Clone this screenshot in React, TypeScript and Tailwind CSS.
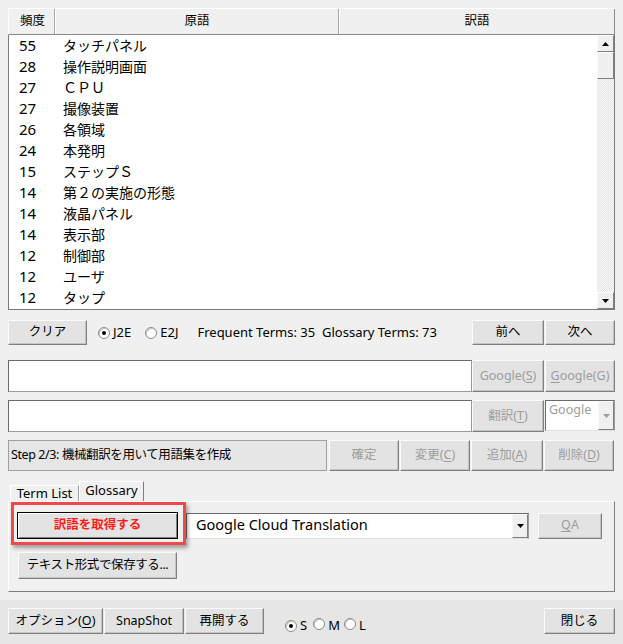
import React from "react";

const ROWS: [string, string][] = [
  ["55", "タッチパネル"],
  ["28", "操作説明画面"],
  ["27", "ＣＰＵ"],
  ["27", "撮像装置"],
  ["26", "各領域"],
  ["24", "本発明"],
  ["15", "ステップＳ"],
  ["14", "第２の実施の形態"],
  ["14", "液晶パネル"],
  ["14", "表示部"],
  ["12", "制御部"],
  ["12", "ユーザ"],
  ["12", "タップ"],
];

function U({ children }: { children: React.ReactNode }) {
  return <span className="underline underline-offset-2">{children}</span>;
}

function Btn({
  children,
  disabled,
  className = "",
}: {
  children: React.ReactNode;
  disabled?: boolean;
  className?: string;
}) {
  return (
    <button
      type="button"
      className={`flex shrink-0 items-center justify-center border border-t-[#fbfbfb] border-l-[#fbfbfb] border-r-[#7e7e7e] border-b-[#7e7e7e] bg-[#e3e3e3] text-[12.5px] shadow-[inset_-1px_-1px_0_#c4c4c4] ${
        disabled ? "text-[#9d9d9d]" : "text-black"
      } ${className}`}
    >
      {children}
    </button>
  );
}

function Radio({ checked }: { checked?: boolean }) {
  return (
    <span className="inline-flex h-[12px] w-[12px] shrink-0 items-center justify-center rounded-full border border-[#8a8a8a] bg-white shadow-[inset_1px_1px_0_#c8c8c8]">
      {checked && <span className="h-[4px] w-[4px] rounded-full bg-black" />}
    </span>
  );
}

function Arrow({ up, color = "#000" }: { up?: boolean; color?: string }) {
  return (
    <svg width="7" height="4" viewBox="0 0 7 4">
      <polygon points={up ? "0,4 7,4 3.5,0" : "0,0 7,0 3.5,4"} fill={color} />
    </svg>
  );
}

function TextBox({ className = "" }: { className?: string }) {
  return (
    <div
      className={`border border-t-[#6b6b6b] border-l-[#6b6b6b] border-r-[#9a9a9a] border-b-[#9a9a9a] bg-white ${className}`}
    />
  );
}

export default function App() {
  return (
    <div className="relative flex h-[644px] w-[623px] flex-col overflow-hidden bg-[#f0f0f0] font-['Noto_Sans','Noto_Sans_CJK_JP',sans-serif] text-black">
      {/* term list */}
      <div className="mx-2 mt-2 flex h-[302px] w-[607px] flex-col">
        <div className="flex h-[27px] border-t border-l border-white border-b border-b-[#8a8a8a] bg-[#f0f0f0] text-[12.5px]">
          <div className="flex w-[46px] items-center justify-center border-r border-[#a8a8a8] pl-[2px]">頻度</div>
          <div className="flex w-[284px] items-center justify-center border-r border-[#a8a8a8] border-l border-l-white">原語</div>
          <div className="flex flex-1 items-center justify-center border-l border-white border-r border-r-[#8a8a8a]">訳語</div>
        </div>
        <div className="flex flex-1 border-l border-b border-r border-[#7a7a7a] bg-white">
          <div className="flex flex-1 flex-col">
            {ROWS.map(([n, t], i) => (
              <div key={i} className="flex h-[21px] items-center">
                <span className="w-[54px] pl-[10px] text-[15px]">{n}</span>
                <span className="text-[14px] font-['Noto_Sans_CJK_JP',sans-serif]">{t}</span>
              </div>
            ))}
          </div>
          <div className="flex w-[17px] flex-col">
            <div className="flex h-[17px] items-center justify-center border border-t-white border-l-white border-r-[#7e7e7e] border-b-[#7e7e7e] bg-[#f0f0f0]">
              <Arrow up />
            </div>
            <div className="h-[27px] border border-t-white border-l-white border-r-[#7e7e7e] border-b-[#7e7e7e] bg-[#f0f0f0]" />
            <div className="flex-1 bg-[repeating-conic-gradient(#e4e4e4_0%_25%,#fafafa_0%_50%)] bg-[length:2px_2px]" />
            <div className="flex h-[17px] items-center justify-center border border-t-white border-l-white border-r-[#7e7e7e] border-b-[#7e7e7e] bg-[#f0f0f0]">
              <Arrow />
            </div>
          </div>
        </div>
      </div>

      {/* mode row */}
      <div className="mx-2 mt-[10px] flex h-[25px] items-center text-[13px]">
        <Btn className="h-full w-[79px]">クリア</Btn>
        <div className="ml-[11px] flex items-center gap-[3px]">
          <Radio checked />
          <span>J2E</span>
        </div>
        <div className="ml-[14px] flex items-center gap-[3px]">
          <Radio />
          <span>E2J</span>
        </div>
        <span className="ml-[19px]">Frequent Terms: 35&nbsp;&nbsp;Glossary Terms: 73</span>
        <div className="ml-auto flex h-full">
          <Btn className="h-full w-[72px]">前へ</Btn>
          <Btn className="ml-px h-full w-[70px]">次へ</Btn>
        </div>
      </div>

      {/* source row */}
      <div className="mx-2 mt-[15px] flex h-[32px]">
        <TextBox className="h-full flex-1" />
        <Btn disabled className="h-full w-[72px]">
          Google(<U>S</U>)
        </Btn>
        <Btn disabled className="ml-px h-full w-[70px]">
          <U>G</U>oogle(G)
        </Btn>
      </div>

      {/* target row */}
      <div className="mx-2 mt-2 flex h-[32px]">
        <TextBox className="h-full flex-1" />
        <Btn disabled className="h-full w-[72px]">
          翻訳(<U>T</U>)
        </Btn>
        <div className="ml-px flex h-[31px] w-[70px] border border-t-[#6b6b6b] border-l-[#6b6b6b] border-r-[#9a9a9a] border-b-[#e0e0e0] bg-white">
          <span className="flex-1 pl-[3px] pt-[1px] text-[12.5px] leading-[16px] text-[#9d9d9d]">Google</span>
          <div className="flex w-[16px] items-center justify-center border border-t-[#f8f8f8] border-l-[#f8f8f8] border-r-[#7e7e7e] border-b-[#7e7e7e] bg-[#f0f0f0]">
            <Arrow color="#9d9d9d" />
          </div>
        </div>
      </div>

      {/* status row */}
      <div className="mx-2 mt-2 flex h-[31px]">
        <div className="flex h-full w-[319px] items-center border border-[#a0a0a0] bg-[#e6e6e6] pl-[2px] text-[12.5px] tracking-[-0.4px]">
          Step 2/3: 機械翻訳を用いて用語集を作成
        </div>
        <Btn disabled className="ml-[2px] h-full w-[70px]">確定</Btn>
        <Btn disabled className="ml-px h-full w-[70px]">
          変更(<U>C</U>)
        </Btn>
        <Btn disabled className="ml-px h-full w-[72px]">
          追加(<U>A</U>)
        </Btn>
        <Btn disabled className="ml-px h-full w-[70px]">
          削除(<U>D</U>)
        </Btn>
      </div>

      {/* tabs */}
      <div className="mx-2 mt-[10px] flex h-[20px] items-end pl-[2px] text-[13px]">
        <div className="flex h-[16px] w-[69px] items-center justify-center border-t border-l border-white border-r border-r-[#a0a0a0]">
          Term List
        </div>
        <div className="-mb-px flex h-[21px] w-[65px] items-center justify-center border-t border-l border-white border-r border-r-[#7e7e7e] bg-[#f0f0f0] pb-[2px]">
          Glossary
        </div>
      </div>
      <div className="mx-2 flex h-[91px] w-[607px] flex-col border border-t-white border-l-white border-r-[#7e7e7e] border-b-[#7e7e7e] pl-[8px] pt-[10px]">
        <div className="flex h-[27px] items-center">
          <button
            type="button"
            className="flex h-[27px] w-[161px] items-center justify-center border border-black bg-[#e3e3e3] text-[12.5px] font-bold text-[#ff1a1a] shadow-[inset_1px_1px_0_#ffffff,inset_-1px_-1px_0_#7e7e7e]"
          >
            訳語を取得する
          </button>
          <div className="ml-[8px] flex h-[26px] w-[343px] border border-t-[#6b6b6b] border-l-[#6b6b6b] border-r-[#9a9a9a] border-b-[#e0e0e0] bg-white">
            <span className="flex flex-1 items-center pb-[2px] pl-[9px] text-[14.5px]">Google Cloud Translation</span>
            <div className="flex w-[16px] items-center justify-center border border-t-[#f8f8f8] border-l-[#f8f8f8] border-r-[#7e7e7e] border-b-[#7e7e7e] bg-[#f0f0f0]">
              <Arrow />
            </div>
          </div>
          <Btn disabled className="ml-[9px] h-[26px] w-[64px]">
            <U>Q</U>A
          </Btn>
        </div>
        <Btn className="ml-px mt-[13px] h-[27px] w-[159px] tracking-[-0.4px]">テキスト形式で保存する...</Btn>
      </div>

      {/* annotation box */}
      <div className="pointer-events-none absolute left-[11px] top-[502px] h-[43px] w-[175px] border-[3px] border-[#f24848] shadow-[2px_3px_4px_rgba(0,0,0,0.35)]" />

      {/* bottom bar */}
      <div className="mt-2 flex flex-1 items-start bg-[#e6e6e6] px-2 pt-2 text-[12.5px]">
        <Btn className="h-[26px] w-[95px]">
          オプション(<U>O</U>)
        </Btn>
        <Btn className="ml-px h-[26px] w-[80px]">SnapShot</Btn>
        <Btn className="ml-px h-[26px] w-[79px]">再開する</Btn>
        <div className="ml-[21px] mt-[8px] flex items-center text-[13px]">
          <Radio checked />
          <span className="ml-[3px]">S</span>
          <span className="ml-[6px]">
            <Radio />
          </span>
          <span className="ml-[3px]">M</span>
          <span className="ml-[4px]">
            <Radio />
          </span>
          <span className="ml-[3px]">L</span>
        </div>
        <Btn className="ml-auto h-[26px] w-[71px]">閉じる</Btn>
      </div>
    </div>
  );
}
